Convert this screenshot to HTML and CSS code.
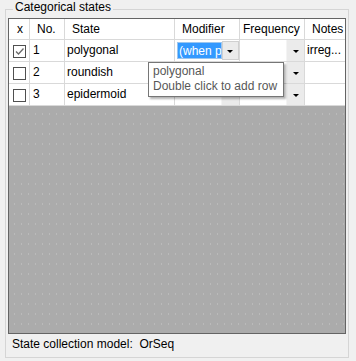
FILE: index.html
```html
<!DOCTYPE html>
<html>
<head>
<meta charset="utf-8">
<link rel="stylesheet" href="styles.css">
</head>
<body>
<div class="group">
  <div class="title">Categorical states</div>
  <div class="grid">
    <div class="row head">
      <div class="cell c-x">x</div>
      <div class="cell c-no">No.</div>
      <div class="cell c-state">State</div>
      <div class="cell c-mod">Modifier</div>
      <div class="cell c-freq">Frequency</div>
      <div class="cell c-notes">Notes</div>
    </div>
    <div class="row">
      <div class="cell c-x"><span class="chk"><svg width="11" height="11" viewBox="0 0 11 11"><path d="M2 5.5 L4.5 8 L9.5 2.5" fill="none" stroke="#6a6a6a" stroke-width="1.3"/></svg></span></div>
      <div class="cell c-no">1</div>
      <div class="cell c-state">polygonal</div>
      <div class="cell c-mod edit"><span class="sel">(when pr</span><span class="btn"><i class="arr"></i></span></div>
      <div class="cell c-freq drop"><span class="btn"><i class="arr"></i></span></div>
      <div class="cell c-notes">irreg...</div>
    </div>
    <div class="row">
      <div class="cell c-x"><span class="chk"></span></div>
      <div class="cell c-no">2</div>
      <div class="cell c-state">roundish</div>
      <div class="cell c-mod drop"><span class="btn"><i class="arr"></i></span></div>
      <div class="cell c-freq drop"><span class="btn"><i class="arr"></i></span></div>
      <div class="cell c-notes"></div>
    </div>
    <div class="row">
      <div class="cell c-x"><span class="chk"></span></div>
      <div class="cell c-no">3</div>
      <div class="cell c-state">epidermoid</div>
      <div class="cell c-mod drop"><span class="btn"><i class="arr"></i></span></div>
      <div class="cell c-freq drop"><span class="btn"><i class="arr"></i></span></div>
      <div class="cell c-notes"></div>
    </div>
    <div class="filler"></div>
    <div class="tooltip">polygonal<br>Double click to add row</div>
  </div>
  <div class="footer">State collection model:&nbsp; OrSeq</div>
</div>
</body>
</html>
```
FILE: styles.css
```css
html, body {
  margin: 0;
  padding: 0;
  background: #f0f0f0;
}
body {
  font-family: "Liberation Sans", Arial, sans-serif;
  font-size: 12px;
  color: #000;
  width: 356px;
  height: 361px;
  overflow: hidden;
}
.group {
  margin: 9px 7px 0 5px;
  border: 1px solid #d5d5d5;
  height: 349px;
  box-sizing: border-box;
  padding: 0 2px;
}
.title {
  display: block;
  width: max-content;
  margin-top: -10px;
  margin-left: 5px;
  padding: 0 2px 0 2px;
  background: #f0f0f0;
  line-height: 15px;
  height: 15px;
}
.grid {
  position: relative;
  margin-top: 3px;
  height: 316px;
  box-sizing: border-box;
  border: 1px solid #646464;
  display: flex;
  flex-direction: column;
  background: #ababab;
}
.row {
  display: grid;
  grid-template-columns: 21px 35px 110px 65px 65px 40px;
  height: 22px;
  background: #fff;
}
.row.head {
  height: 21px;
}
.cell {
  border-right: 1px solid #d9d9d9;
  border-bottom: 1px solid #d9d9d9;
  line-height: 21px;
  white-space: nowrap;
  overflow: hidden;
  padding-left: 2px;
  position: relative;
}
.head .cell {
  line-height: 20px;
  padding-left: 7px;
}
.head .c-x { padding-left: 8px; }
.head .c-freq { padding-left: 3px; }
.cell.c-notes { border-right: none; }
.c-no { padding-left: 3px; }
.c-x {
  display: flex;
  align-items: center;
  padding-left: 4px;
}
.chk {
  width: 11px;
  height: 11px;
  border: 1px solid #4f4f4f;
  background: #fff;
  display: block;
  margin-top: 1px;
}
.chk svg { display: block; }
.drop, .edit {
  display: flex;
  justify-content: flex-end;
  padding: 0;
}
.edit {
  padding: 1px 0 1px 2px;
  justify-content: space-between;
  align-items: stretch;
}
.sel {
  background: #3399ff;
  color: #fff;
  line-height: 17px;
  margin: 1px 0;
  padding-left: 1px;
  width: 43px;
  overflow: hidden;
  border: 1px solid #9cc6ef;
}
.btn {
  width: 17px;
  background: #ebebeb;
  display: flex;
  align-items: center;
  justify-content: center;
}
.drop .btn {
  height: 21px;
  border-left: 1px solid #f4f4f4;
}
.edit .btn {
  border: 1px solid #d0d0d0;
  width: 16px;
}
.arr {
  width: 0;
  height: 0;
  border-left: 3px solid transparent;
  border-right: 3px solid transparent;
  border-top: 3px solid #000;
  margin-top: 1px;
}
.filler {
  flex: 1;
  background-color: #ababab;
  background-image: radial-gradient(circle, #bababa 0.6px, transparent 1.1px);
  background-size: 7px 10px;
  background-position: 2px 3px;
}
.tooltip {
  position: absolute;
  left: 139px;
  top: 43px;
  width: 130px;
  height: 32px;
  padding: 0 0 0 4px;
  border: 1px solid #767676;
  background: #fff;
  color: #575757;
  line-height: 15px;
  padding-top: 1px;
  box-sizing: content-box;
  box-shadow: 2px 2px 2px rgba(0,0,0,0.3);
  white-space: nowrap;
}
.footer {
  margin-top: 2px;
  padding-left: 4px;
  line-height: 16px;
}
```
